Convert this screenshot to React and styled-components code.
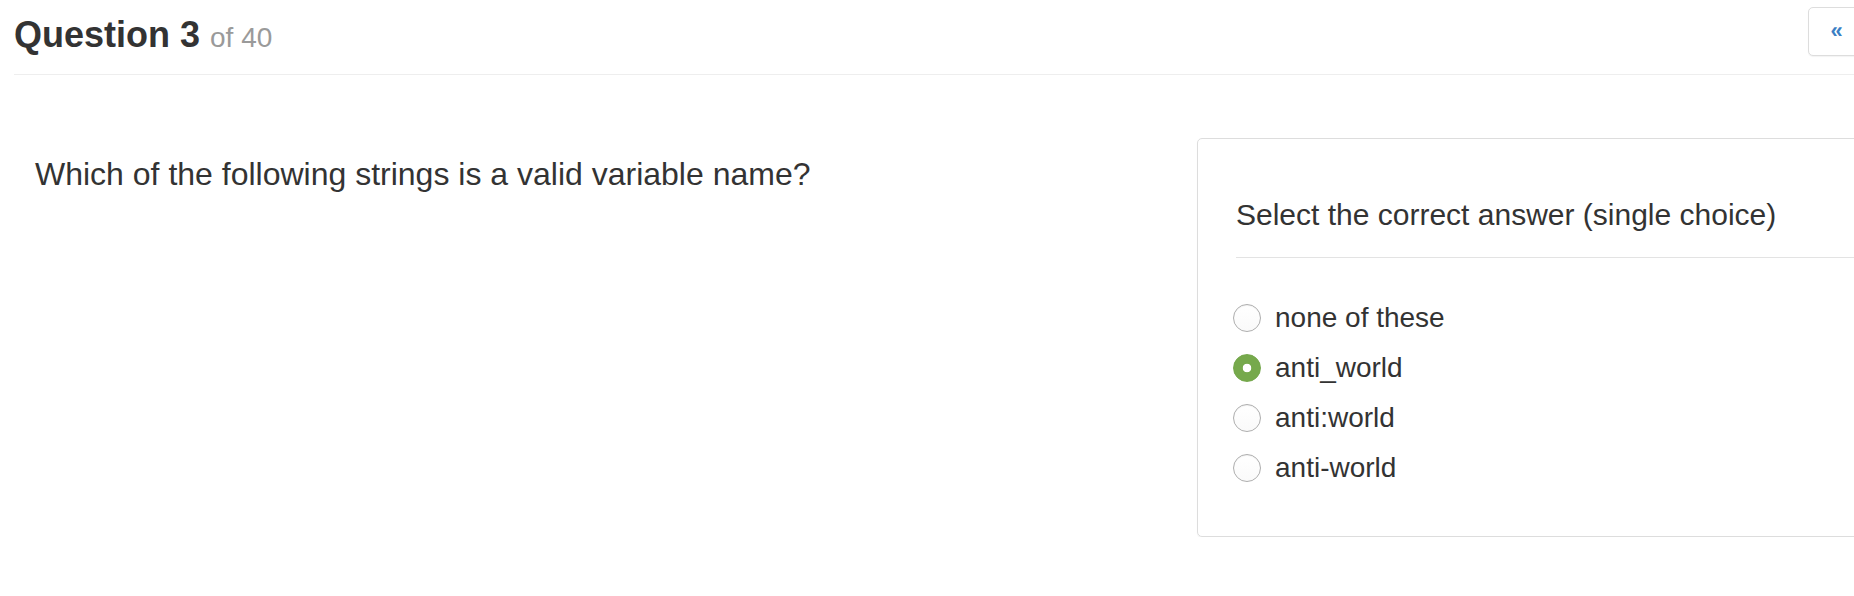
import React from 'react';
import styled, { createGlobalStyle } from 'styled-components';

const GlobalStyle = createGlobalStyle`
  html, body {
    margin: 0;
    padding: 0;
    background: #fff;
    overflow: hidden;
  }
  body {
    font-family: "Liberation Sans", Arial, Helvetica, sans-serif;
    color: #333;
  }
`;

const options = [
  { id: 'a', label: 'none of these', checked: false },
  { id: 'b', label: 'anti_world', checked: true },
  { id: 'c', label: 'anti:world', checked: false },
  { id: 'd', label: 'anti-world', checked: false },
];

const App = () => {
  return (
    <>
      <GlobalStyle />
      <Page>
        <Header>
          <Title>
            Question 3 <Small>of 40</Small>
          </Title>
          <CollapseButton type="button">«</CollapseButton>
        </Header>
        <Body>
          <QuestionCol>
            <QuestionText>
              Which of the following strings is a valid variable name?
            </QuestionText>
          </QuestionCol>
          <Panel>
            <PanelTitle>Select the correct answer (single choice)</PanelTitle>
            <Divider />
            <OptionList>
              {options.map(option => (
                <Option key={option.id}>
                  <Radio checked={option.checked} />
                  <OptionLabel>{option.label}</OptionLabel>
                </Option>
              ))}
            </OptionList>
          </Panel>
        </Body>
      </Page>
    </>
  );
};

export default App;

const Page = styled.div`
  width: 1851px;
  margin-left: 14px;
`;

const Header = styled.div`
  display: flex;
  justify-content: space-between;
  align-items: flex-start;
  height: 67px;
  padding-top: 7px;
  border-bottom: 1px solid #eee;
`;

const Title = styled.h1`
  margin: 8px 0 0;
  font-size: 36px;
  line-height: 1.1;
  font-weight: bold;
  color: #333;
`;

const Small = styled.small`
  font-size: 28px;
  font-weight: normal;
  color: #9a9a9a;
`;

const CollapseButton = styled.button`
  width: 57px;
  height: 49px;
  padding: 0 0 2px;
  border: 1px solid #ddd;
  border-radius: 5px;
  background: #fff;
  box-shadow: 0 1px 1px rgba(0, 0, 0, 0.05);
  color: #3b7fc4;
  font-family: "Liberation Sans", Arial, sans-serif;
  font-size: 22px;
  font-weight: bold;
  line-height: 1;
  cursor: pointer;
`;

const Body = styled.div`
  display: grid;
  grid-template-columns: 1183px 1fr;
  margin-top: 63px;
`;

const QuestionCol = styled.div`
  padding: 16px 0 0 21px;
`;

const QuestionText = styled.p`
  margin: 0;
  font-size: 32px;
  line-height: 40px;
`;

const Panel = styled.div`
  border: 1px solid #ddd;
  border-radius: 5px;
  padding: 0 0 43px 38px;
  box-shadow: 0 1px 1px rgba(0, 0, 0, 0.05);
`;

const PanelTitle = styled.div`
  margin-top: 58px;
  font-size: 30px;
  line-height: 36px;
`;

const Divider = styled.div`
  height: 1px;
  margin-top: 24px;
  background: #e3e3e3;
`;

const OptionList = styled.div`
  display: flex;
  flex-direction: column;
  margin: 35px 0 0 -3px;
`;

const Option = styled.label`
  display: flex;
  align-items: center;
  gap: 14px;
  height: 50px;
`;

const Radio = styled.span`
  box-sizing: border-box;
  flex: none;
  width: 28px;
  height: 28px;
  border-radius: 50%;
  border: 1px solid ${({ checked }) => (checked ? '#74a74b' : '#aeaeae')};
  background: ${({ checked }) =>
    checked
      ? 'radial-gradient(circle, #fff 0 4px, #76a94c 4.6px)'
      : 'linear-gradient(#ffffff, #fafafa)'};
  box-shadow: ${({ checked }) =>
    checked ? 'none' : 'inset 0 1px 1px rgba(0, 0, 0, 0.05)'};
`;

const OptionLabel = styled.span`
  font-size: 28px;
  line-height: 32px;
`;
